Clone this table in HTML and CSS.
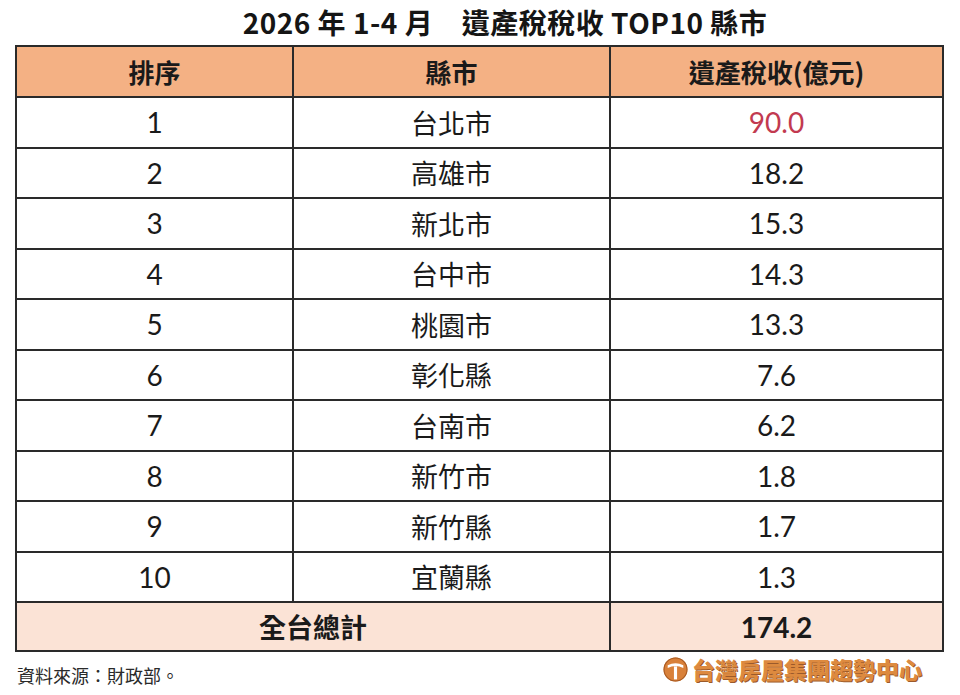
FILE: index.html
```html
<!DOCTYPE html>
<html lang="zh-Hant">
<head>
<meta charset="utf-8">
<link rel="stylesheet" href="styles.css">
</head>
<body>
<div class="page">
  <h1 class="title">2026 年 1-4 月　遺產稅稅收 TOP10 縣市</h1>
  <table class="tbl">
    <colgroup><col class="c1"><col class="c2"><col class="c3"></colgroup>
    <thead>
      <tr><th>排序</th><th>縣市</th><th>遺產稅收(億元)</th></tr>
    </thead>
    <tbody>
      <tr><td class="num">1</td><td>台北市</td><td class="num red">90.0</td></tr>
      <tr><td class="num">2</td><td>高雄市</td><td class="num">18.2</td></tr>
      <tr><td class="num">3</td><td>新北市</td><td class="num">15.3</td></tr>
      <tr><td class="num">4</td><td>台中市</td><td class="num">14.3</td></tr>
      <tr><td class="num">5</td><td>桃園市</td><td class="num">13.3</td></tr>
      <tr><td class="num">6</td><td>彰化縣</td><td class="num">7.6</td></tr>
      <tr><td class="num">7</td><td>台南市</td><td class="num">6.2</td></tr>
      <tr><td class="num">8</td><td>新竹市</td><td class="num">1.8</td></tr>
      <tr><td class="num">9</td><td>新竹縣</td><td class="num">1.7</td></tr>
      <tr><td class="num">10</td><td>宜蘭縣</td><td class="num">1.3</td></tr>
      <tr class="total"><td colspan="2">全台總計</td><td class="num">174.2</td></tr>
    </tbody>
  </table>
  <div class="foot">
    <span class="src">資料來源：財政部。</span>
    <span class="logo">
      <svg class="logo-icon" width="25" height="25" viewBox="0 0 24 24">
        <circle cx="12" cy="12" r="11.5" fill="#d9813a"/>
        <circle cx="12" cy="12" r="11" fill="none" stroke="#a85a22" stroke-width="1"/>
        <path d="M4.5 8 Q12 4 19.5 8 L19.5 10.5 Q12 7 4.5 10.5 Z" fill="#fff"/>
        <rect x="10.5" y="9" width="3" height="12.5" fill="#fff"/>
      </svg>
      <span class="logo-text">台灣房屋集團趨勢中心</span>
    </span>
  </div>
</div>
</body>
</html>
```
FILE: styles.css
```css
html, body {
  margin: 0;
  padding: 0;
  background: #fff;
}
.page {
  width: 960px;
  height: 695px;
  font-family: "Noto Sans CJK TC", "Noto Sans", sans-serif;
  color: #1a1a1a;
  overflow: hidden;
}
.title {
  margin: 0;
  height: 45px;
  line-height: 44px;
  font-size: 28px;
  font-weight: 700;
  text-align: center;
  padding-left: 50px;
  letter-spacing: 0.5px;
  color: #151515;
}
.tbl {
  margin-left: 15px;
  width: 927px;
  border-collapse: collapse;
  table-layout: fixed;
  border: 2px solid #2a2a2a;
}
.c1 { width: 277px; }
.c2 { width: 317px; }
.c3 { width: 333px; }
.tbl th, .tbl td {
  border: 2px solid #2a2a2a;
  text-align: center;
  padding: 0;
  height: 48.5px;
  font-size: 27px;
  font-weight: 400;
  line-height: 1;
}
.tbl th {
  background: #f4b184;
  font-weight: 700;
  font-size: 26px;
  height: 49px;
  color: #1a1a1a;
}
.num {
  font-family: Lato, "Noto Sans", sans-serif;
  font-size: 28px !important;
}
.red { color: #c23a50; }
.total td {
  background: #fbe3d6;
  font-weight: 700;
  height: 47px;
}
.total td.num { font-weight: 700; }
.foot {
  display: flex;
  justify-content: space-between;
  align-items: flex-start;
  padding: 0 38px 0 17px;
}
.src {
  font-size: 18px;
  margin-top: 10px;
  color: #2a2a2a;
}
.logo {
  display: flex;
  align-items: center;
  gap: 4px;
}
.logo-text {
  font-size: 23px;
  font-weight: 900;
  color: #dd8a3f;
  text-shadow: 1px 1px 0 #9b5a2b;
}
```
